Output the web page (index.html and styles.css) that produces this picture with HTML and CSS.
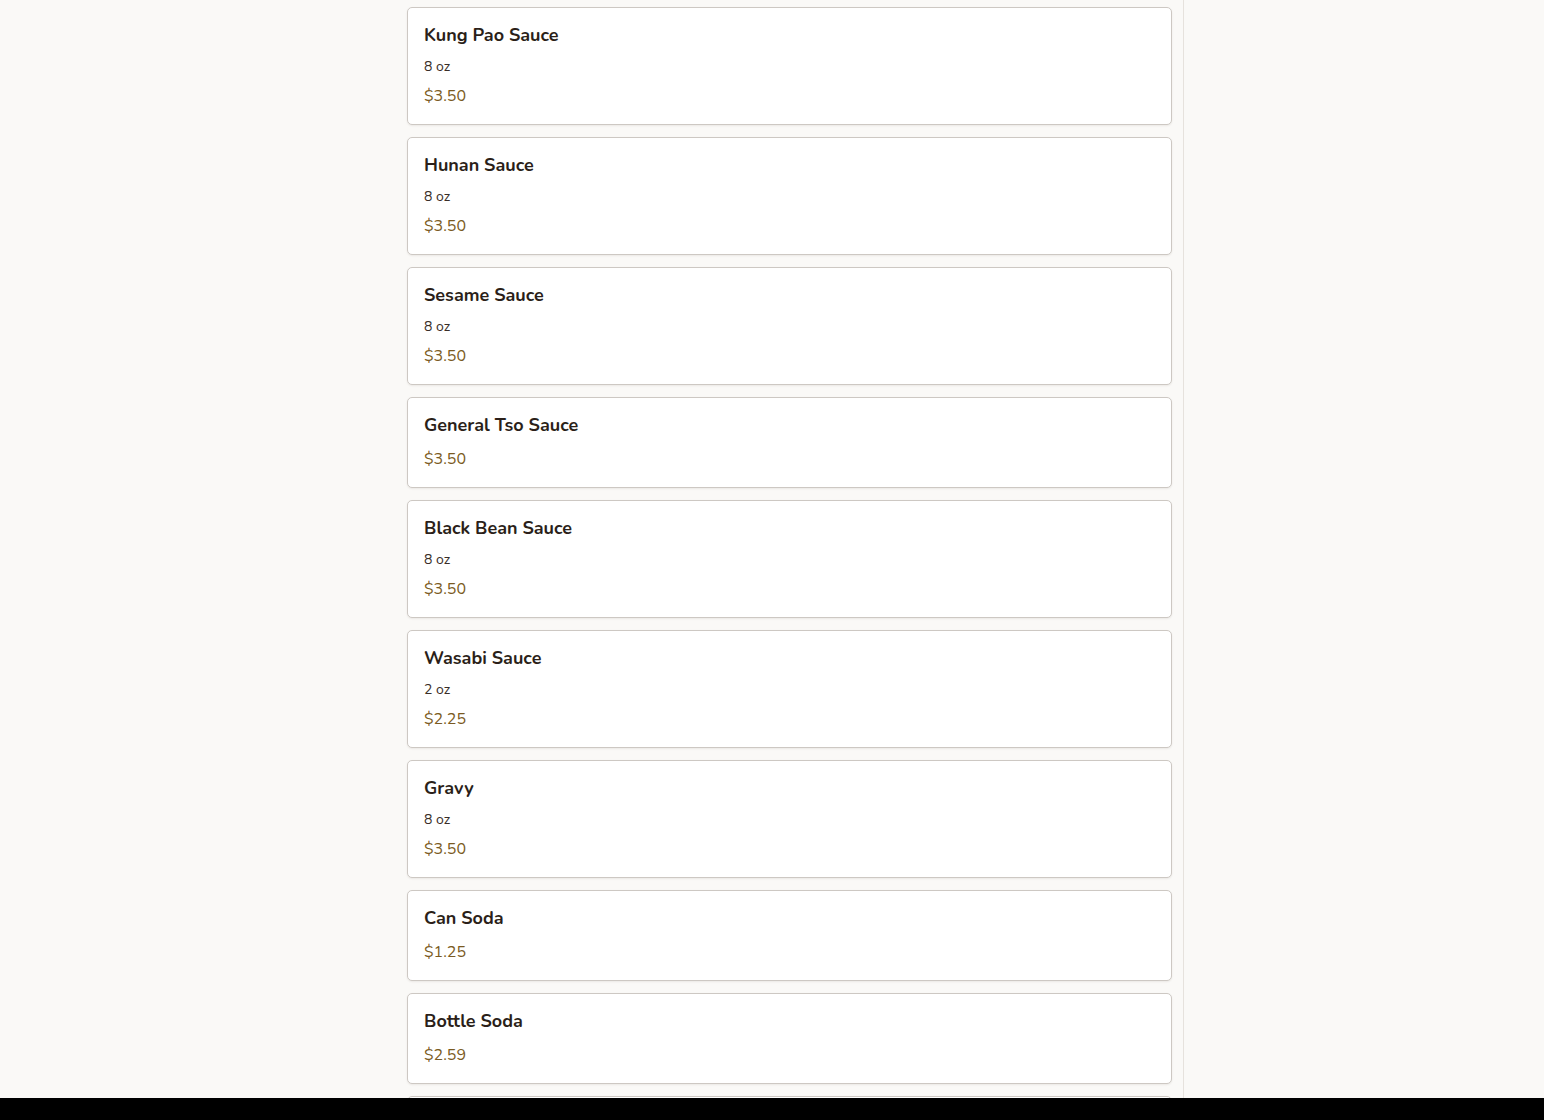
FILE: index.html
```html
<!DOCTYPE html>
<html lang="en">
<head>
<meta charset="utf-8">
<title>Menu</title>
<link rel="stylesheet" href="styles.css">
</head>
<body>
<div class="screen">
  <div class="layout">
    <div class="spacer"></div>
    <main class="column">
      <div class="card"><div class="name">Kung Pao Sauce</div><div class="size">8 oz</div><div class="price">$3.50</div></div>
      <div class="card"><div class="name">Hunan Sauce</div><div class="size">8 oz</div><div class="price">$3.50</div></div>
      <div class="card"><div class="name">Sesame Sauce</div><div class="size">8 oz</div><div class="price">$3.50</div></div>
      <div class="card"><div class="name">General Tso Sauce</div><div class="price">$3.50</div></div>
      <div class="card"><div class="name">Black Bean Sauce</div><div class="size">8 oz</div><div class="price">$3.50</div></div>
      <div class="card"><div class="name">Wasabi Sauce</div><div class="size">2 oz</div><div class="price">$2.25</div></div>
      <div class="card"><div class="name">Gravy</div><div class="size">8 oz</div><div class="price">$3.50</div></div>
      <div class="card"><div class="name">Can Soda</div><div class="price">$1.25</div></div>
      <div class="card"><div class="name">Bottle Soda</div><div class="price">$2.59</div></div>
      <div class="card card-placeholder"></div>
    </main>
    <div class="aside"></div>
  </div>
  <div class="bottom-bar"></div>
</div>
</body>
</html>
```
FILE: styles.css
```css
* { box-sizing: border-box; }
html, body { margin: 0; padding: 0; }
body {
  background: #faf9f7;
  font-family: "Nunito", "Noto Sans", "Open Sans", sans-serif;
  color: #2b1f19;
}
.screen {
  height: 1120px;
  display: flex;
  flex-direction: column;
  overflow: hidden;
}
.layout {
  flex: 1;
  min-height: 0;
  display: grid;
  grid-template-columns: 395px 789px 1fr;
  overflow: hidden;
}
.column {
  border-right: 1px solid #e6e2dd;
  padding: 7px 11px 0 12px;
  display: flex;
  flex-direction: column;
  gap: 12px;
  overflow: hidden;
}
.card {
  flex: none;
  background: #ffffff;
  border: 1px solid #cdc8c3;
  border-radius: 5px;
  box-shadow: 0 1px 2px rgba(60, 40, 20, 0.08);
  padding: 17px 16px 16px 16px;
}
.card-placeholder { height: 91px; }
.name {
  font-size: 18px;
  line-height: 21px;
  font-weight: 700;
  color: #2b1f19;
}
.size {
  margin-top: 11px;
  font-size: 14px;
  line-height: 20px;
  color: #3a2e27;
}
.price {
  margin-top: 7px;
  font-size: 16px;
  line-height: 24px;
  color: #7a5a22;
}
.name + .price { margin-top: 11px; }
.bottom-bar {
  flex: none;
  height: 22px;
  background: #000;
}
```
